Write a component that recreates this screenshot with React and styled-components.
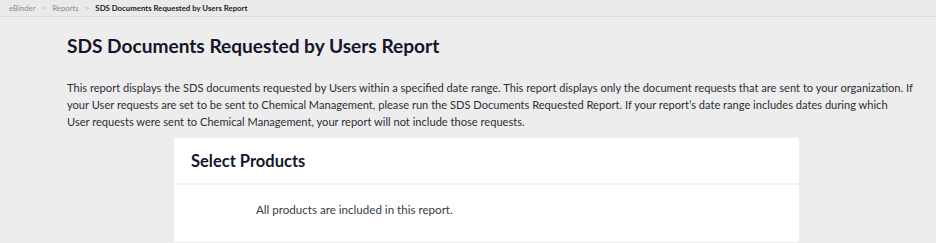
import styled, { createGlobalStyle } from 'styled-components';

const GlobalStyle = createGlobalStyle`
  html, body {
    margin: 0;
    padding: 0;
    background: #ededed;
    font-family: Lato, "Noto Sans", sans-serif;
  }
`;

const Page = styled.div`
  width: 936px;
  height: 243px;
  overflow: hidden;
  background: #ededed;
`;

const Breadcrumb = styled.nav`
  display: flex;
  align-items: center;
  gap: 5px;
  height: 16px;
  padding-left: 9px;
  background: #eaeaea;
  border-bottom: 1px solid #dcdcdc;
  font-size: 7.8px;
  color: #8a8a8a;
`;

const Crumb = styled.span`
  color: ${(p) => (p.$current ? '#1c1c28' : '#8a8a8a')};
  font-weight: ${(p) => (p.$current ? 700 : 400)};
`;

const Sep = styled.span`
  color: #b5b5b5;
  font-size: 8px;
  padding: 0 1px;
`;

const Content = styled.main`
  padding: 16px 0 0 67px;
`;

const Title = styled.h1`
  margin: 0;
  font-size: 19.1px;
  font-weight: 700;
  color: #15162b;
  line-height: 26px;
`;

const Intro = styled.p`
  margin: 20px 0 0;
  width: 860px;
  font-size: 11.1px;
  line-height: 17px;
  color: #2e2e36;
`;

const Card = styled.section`
  margin: 8px 0 0 107px;
  width: 625px;
  height: 104px;
  background: #fff;
  border-radius: 3px;
`;

const CardHeader = styled.div`
  height: 45px;
  display: flex;
  align-items: center;
  padding: 0 17px;
  border-bottom: 2px solid #eef4fb;
  font-size: 16.5px;
  font-weight: 700;
  color: #15162b;
`;

const CardBody = styled.div`
  padding: 17px 0 0 82px;
  font-size: 11.6px;
  line-height: 16px;
  color: #3a3a44;
`;

export default function App() {
  return (
    <Page>
      <GlobalStyle />
      <Breadcrumb>
        <Crumb>eBinder</Crumb>
        <Sep>&gt;</Sep>
        <Crumb>Reports</Crumb>
        <Sep>&gt;</Sep>
        <Crumb $current>SDS Documents Requested by Users Report</Crumb>
      </Breadcrumb>
      <Content>
        <Title>SDS Documents Requested by Users Report</Title>
        <Intro>
          This report displays the SDS documents requested by Users within a specified date range. This report
          displays only the document requests that are sent to your organization. If
          <br />
          your User requests are set to be sent to Chemical Management, please run the SDS Documents Requested
          Report. If your report’s date range includes dates during which
          <br />
          User requests were sent to Chemical Management, your report will not include those requests.
        </Intro>
        <Card>
          <CardHeader>Select Products</CardHeader>
          <CardBody>All products are included in this report.</CardBody>
        </Card>
      </Content>
    </Page>
  );
}
